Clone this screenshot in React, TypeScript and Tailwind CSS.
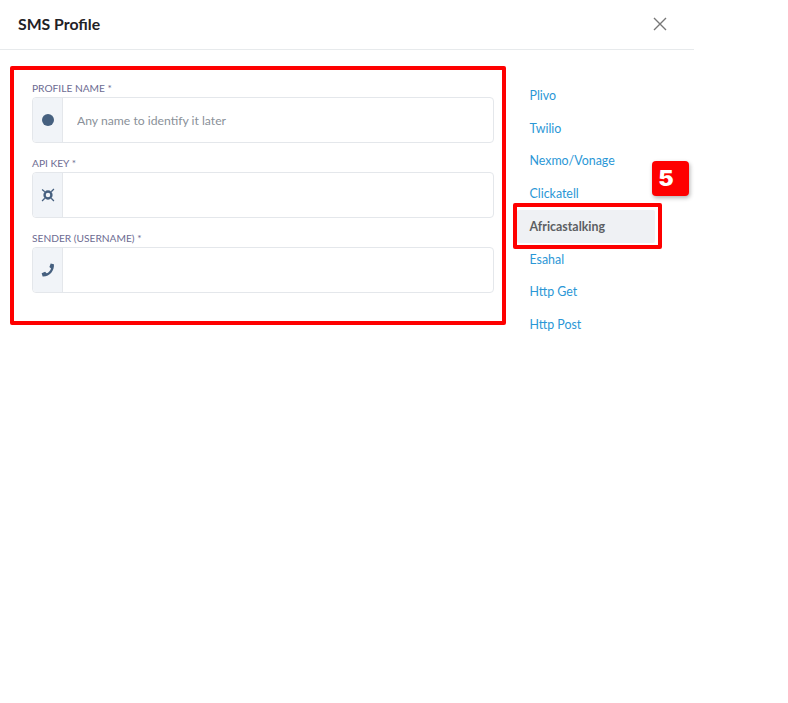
import React from "react";

const providers = ["Plivo", "Twilio", "Nexmo/Vonage", "Clickatell", "Africastalking", "Esahal", "Http Get", "Http Post"];

const Field = ({ label, icon, placeholder }: { label: string; icon: React.ReactNode; placeholder?: string }) => (
    <div className="w-[462px]">
        <div className="h-[29px] pt-[12px] text-[10.2px] leading-[16px] uppercase text-[#6d6b92]">{label}</div>
        <div className="flex h-[46px] rounded-[4px] border border-[#e4e7eb] bg-white">
            <div className="flex w-[30px] shrink-0 items-center justify-center rounded-l-[4px] border-r border-[#e4e7eb] bg-[#f1f4f8] text-[#46607f]">
                {icon}
            </div>
            <input
                className="w-full pl-[14px] pt-[3px] text-[12.2px] text-[#333] outline-none placeholder:text-[#8a9199]"
                placeholder={placeholder}
            />
        </div>
    </div>
);

const App = () => {
    return (
        <div className="h-[703px] w-[788px] bg-white font-['Lato',sans-serif]">
            <div className="w-[694px]">
                <div className="flex h-[50px] items-center justify-between border-b border-[#e7eaec] pl-[18px] pr-[27px]">
                    <h1 className="-mt-[2px] text-[15.8px] font-bold text-[#1f2226]">SMS Profile</h1>
                    <svg width="14" height="14" viewBox="0 0 14 14" className="-mt-[2px] text-[#777]">
                        <path d="M1 1L13 13M13 1L1 13" stroke="currentColor" strokeWidth="1.4" fill="none" />
                    </svg>
                </div>
                <div className="flex pl-[10px]">
                    <div className="mt-4 h-[259px] w-[496px] rounded-[2px] border-4 border-[#fe0000] pl-[18px]">
                        <div className="-mt-[2px] flex flex-col">
                            <Field
                                label="Profile Name *"
                                placeholder="Any name to identify it later"
                                icon={<span className="h-3 w-3 rounded-full bg-[#46607f]" />}
                            />
                            <Field
                                label="API Key *"
                                icon={
                                    <svg width="14" height="14" viewBox="0 0 13 13" fill="none" stroke="currentColor">
                                        <circle cx="6.5" cy="6.5" r="3.2" strokeWidth="2.2" />
                                        <path d="M1 12L3.5 9.5M12 1L9.5 3.5M1 1.5L3.5 3.5M12 12L9.5 9.5" strokeWidth="1.2" />
                                    </svg>
                                }
                            />
                            <Field
                                label="Sender (Username) *"
                                icon={
                                    <svg width="14" height="14" viewBox="0 0 13 13" fill="currentColor">
                                        <path d="M9 0.5L12 1.2C12.6 7 8 13 1.5 12.6L0.6 9.6L3.8 8.2L5.2 9.6C7 8.8 8.6 7.2 9.3 5L7.8 3.8Z" />
                                    </svg>
                                }
                            />
                        </div>
                    </div>
                    <div className="ml-[11px] mt-[29px] w-[138px]">
                        {providers.map((name) =>
                            name === "Africastalking" ? (
                                <div key={name} className="relative flex h-[33px] items-center rounded-[2px] bg-[#eff1f4] pl-[12.5px] pt-[2px] text-[12.4px] font-bold text-[#5c5f63]">
                                    {name}
                                    <div className="absolute -left-[4px] -right-[7px] -top-[7px] -bottom-[6px] rounded-[2px] border-4 border-[#fe0000]" />
                                    <div className="absolute -top-[49px] left-[135px] flex h-[35px] w-[37px] items-center rounded-[4px] bg-[#fe0000] pl-[7px] font-['Inter',sans-serif] text-[21px] font-black text-white shadow-[1px_2px_4px_rgba(0,0,0,0.3)]">
                                        <span className="scale-x-110">5</span>
                                    </div>
                                </div>
                            ) : (
                                <div key={name} className="flex h-[32.7px] items-center pl-[12.5px] pt-[2px] text-[12.4px] text-[#2b97d6]">
                                    {name}
                                </div>
                            )
                        )}
                    </div>
                </div>
            </div>
        </div>
    );
};

export default App;
